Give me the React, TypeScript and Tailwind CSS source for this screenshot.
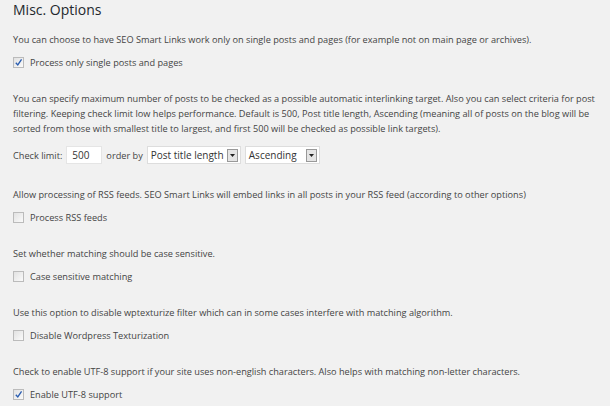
import React from "react";

function Check({ checked }: { checked?: boolean }) {
  return (
    <span className="w-[11px] h-[11px] border border-[#bbb] bg-gradient-to-br from-[#e2e2e2] to-[#fafafa] flex items-center justify-center shrink-0">
      {checked && (
        <svg width="9" height="9" viewBox="0 0 10 10">
          <path d="M2 5.2 L4.2 7.6 L8.4 1.6" fill="none" stroke="#2a5db0" strokeWidth="1.5" />
        </svg>
      )}
    </span>
  );
}

function Option({ text, label, checked }: { text: string; label: string; checked?: boolean }) {
  return (
    <div className="flex flex-col gap-[8px]">
      <p>{text}</p>
      <label className="flex items-center gap-[6px] h-[15px]">
        <Check checked={checked} />
        <span>{label}</span>
      </label>
    </div>
  );
}

function Select({ value, w }: { value: string; w: string }) {
  return (
    <div className={`h-[18px] bg-white border border-[#ddd] flex items-center justify-between pl-[3px] pr-[2px] text-[#333] text-[10px] ${w}`}>
      <span>{value}</span>
      <span className="w-[11px] h-[13px] border border-[#999] bg-[#e5e5e5] flex items-center justify-center">
        <svg width="5" height="3" viewBox="0 0 5 3">
          <path d="M0 0 L5 0 L2.5 3 Z" fill="#222" />
        </svg>
      </span>
    </div>
  );
}

export default function App() {
  return (
    <div
      className="min-h-screen bg-[#f1f1f1] text-[#444] text-[9.2px] leading-[15px] px-[13px]"
      style={{ fontFamily: '"Open Sans", sans-serif' }}
    >
      <h2 className="text-[14px] leading-[20px] text-[#23282d] mb-[12px]">Misc. Options</h2>

      <div className="flex flex-col gap-[21px]">
        <Option
          text="You can choose to have SEO Smart Links work only on single posts and pages (for example not on main page or archives)."
          label="Process only single posts and pages"
          checked
        />

        <div className="flex flex-col gap-[10px] mb-[2px]">
          <p>
            You can specify maximum number of posts to be checked as a possible automatic interlinking target. Also you can select criteria for post
            filtering. Keeping check limit low helps performance. Default is 500, Post title length, Ascending (meaning all of posts on the blog will be
            sorted from those with smallest title to largest, and first 500 will be checked as possible link targets).
          </p>
          <div className="flex items-center">
            <span>Check limit:</span>
            <span className="ml-[4px] w-[36px] h-[18px] bg-white border border-[#e5e5e5] pl-[5px] flex items-center text-[#333] text-[10px]">500</span>
            <span className="ml-[4px]">order by</span>
            <span className="ml-[4px]"><Select value="Post title length" w="w-[94px]" /></span>
            <span className="ml-[4px]"><Select value="Ascending" w="w-[75px]" /></span>
          </div>
        </div>

        <Option
          text="Allow processing of RSS feeds. SEO Smart Links will embed links in all posts in your RSS feed (according to other options)"
          label="Process RSS feeds"
        />
        <Option text="Set whether matching should be case sensitive." label="Case sensitive matching" />
        <Option
          text="Use this option to disable wptexturize filter which can in some cases interfere with matching algorithm."
          label="Disable Wordpress Texturization"
        />
        <Option
          text="Check to enable UTF-8 support if your site uses non-english characters. Also helps with matching non-letter characters."
          label="Enable UTF-8 support"
          checked
        />
      </div>
    </div>
  );
}
